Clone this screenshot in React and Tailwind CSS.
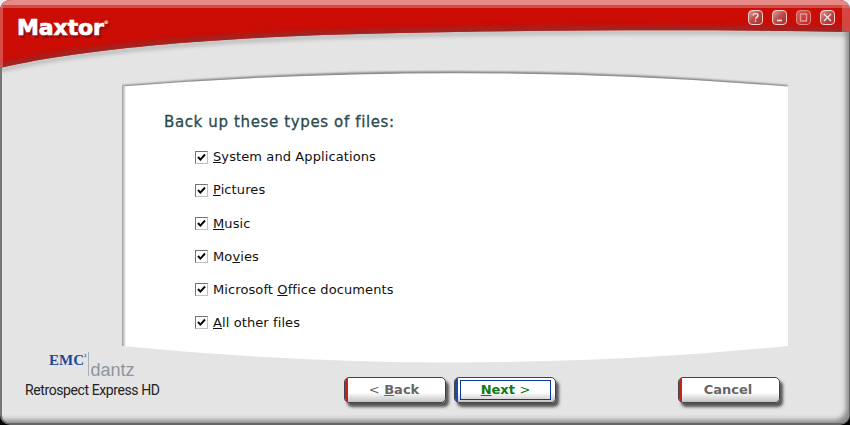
const FILE_TYPES = [
  { before: "", key: "S", after: "ystem and Applications" },
  { before: "", key: "P", after: "ictures" },
  { before: "", key: "M", after: "usic" },
  { before: "Mo", key: "v", after: "ies" },
  { before: "Microsoft ", key: "O", after: "ffice documents" },
  { before: "", key: "A", after: "ll other files" },
];

function TitleButton({ children, dim }) {
  return (
    <div
      className={`w-[15px] h-[15px] rounded-[4px] border flex items-center justify-center bg-gradient-to-br ${
        dim
          ? "border-[#e08a88] from-[#d85a58] to-[#c01c18]"
          : "border-[#f3d0d0] from-[#e49a98] via-[#b84a48] to-[#b02a28]"
      }`}
    >
      <svg width="11" height="11" viewBox="0 0 11 11" fill="none" stroke={dim ? "#e89a98" : "#f6e6e6"} strokeWidth="1.4">
        {children}
      </svg>
    </div>
  );
}

function Check() {
  return (
    <div className="w-[13px] h-[13px] bg-white border border-t-[#77736a] border-l-[#77736a] border-r-[#c4c0b8] border-b-[#c4c0b8] flex items-center justify-center shrink-0">
      <svg width="9" height="9" viewBox="0 0 9 9" fill="none" stroke="#000" strokeWidth="1.9">
        <path d="M1 4l2.4 2.6L8 1.5" />
      </svg>
    </div>
  );
}

function NavButton({ accent, children, focus }) {
  return (
    <div className="w-[102px] h-[26px] rounded-[5px] border border-[#444] bg-gradient-to-b from-white from-60% to-[#c4c4c4] shadow-[3px_4px_3px_#555] flex overflow-hidden">
      <div className={`w-[3px] h-full shrink-0 ${accent}`} />
      <div className="flex-1 flex items-center justify-center pr-[5px]">
        {focus ? (
          <div className="w-[91px] h-[20px] ml-[2px] border border-[#0a3a9a] flex items-center justify-center">
            {children}
          </div>
        ) : (
          children
        )}
      </div>
    </div>
  );
}

export default function App() {
  return (
    <div className="w-[850px] h-[425px] overflow-hidden bg-gradient-to-b from-[#eee] from-50% to-black to-50% font-['DejaVu_Sans',sans-serif]">
      <div className="relative w-full h-full flex flex-col bg-[#e4e4e4] rounded-t-[10px] rounded-b-[10px] border-l-2 border-l-[#777] border-r border-r-[#666] border-b-2 border-b-[#666] shadow-[inset_-6px_-6px_5px_-3px_#888]">
        {/* Red title swoosh */}
        <svg className="absolute left-[-2px] top-0" width="850" height="80" viewBox="0 0 850 80">
          <defs>
            <filter id="soft" x="-5%" y="-30%" width="110%" height="160%">
              <feGaussianBlur stdDeviation="2" />
            </filter>
            <clipPath id="swoosh">
              <path d="M0 12Q0 0 12 0H838Q850 0 850 12V32C700 29 560 30 400 33C180 37 60 54 0 68Z" />
            </clipPath>
          </defs>
          <path d="M0 70C60 56 180 39 400 35C560 32 700 31 850 34" fill="none" stroke="#777" strokeWidth="3" opacity="0.55" filter="url(#soft)" />
          <path d="M0 12Q0 0 12 0H838Q850 0 850 12V32C700 29 560 30 400 33C180 37 60 54 0 68Z" fill="#cb0d06" />
          <g clipPath="url(#swoosh)">
            <path d="M0 68C60 54 180 37 400 33C560 30 700 29 850 32" fill="none" stroke="#8a3030" strokeWidth="9" opacity="0.7" filter="url(#soft)" />
            <rect x="0" y="0" width="850" height="5" fill="#e58a86" />
            <rect x="0" y="5" width="850" height="3" fill="#d44a44" />
            <rect x="842" y="0" width="8" height="34" fill="#e58a86" opacity="0.45" />
            <rect x="0" y="0" width="3" height="68" fill="#e58a86" opacity="0.5" />
          </g>
        </svg>

        {/* Header */}
        <div className="relative h-[70px] shrink-0 flex items-start justify-between pl-[15px] pr-[14px]">
          <div className="mt-[15px] flex items-start text-white font-bold leading-[26px] [text-shadow:2px_3px_1px_#8e1010]">
            <span className="text-[22px] tracking-[-0.1px] [-webkit-text-stroke:0.7px_#fff]">Maxtor</span>
            <span className="text-[5px] leading-[14px]">®</span>
          </div>
          <div className="mt-[10px] flex gap-[9px]">
            <TitleButton>
              <path d="M3.2 3.5C3.2 1 8 1 8 3.5C8 5.3 5.5 5 5.5 7.2M5.5 8.2V9.8" />
            </TitleButton>
            <TitleButton>
              <path d="M3 8.5H8" strokeWidth="1.6" />
            </TitleButton>
            <TitleButton dim>
              <rect x="2.5" y="2" width="6" height="7" />
            </TitleButton>
            <TitleButton>
              <path d="M2 2L9 9M9 2L2 9" />
            </TitleButton>
          </div>
        </div>

        {/* White panel */}
        <div className="relative ml-[120px] w-[666px] flex flex-col">
          <svg className="block" width="666" height="18" viewBox="0 0 666 18">
            <defs>
              <filter id="edge" x="-2%" y="-50%" width="104%" height="200%">
                <feGaussianBlur stdDeviation="1.2" />
              </filter>
              <linearGradient id="capLeft" x1="0" x2="1" y1="0" y2="0">
                <stop offset="0" stopColor="#999" />
                <stop offset="1" stopColor="#fff" />
              </linearGradient>
            </defs>
            <path d="M0 17Q333 -11 666 17" fill="none" stroke="#555" strokeWidth="3" opacity="0.8" filter="url(#edge)" />
            <path d="M0 18V16.5Q333 -10 666 16.5V18Z" fill="#fff" />
            <rect x="0" y="16" width="4" height="2" fill="url(#capLeft)" />
          </svg>
          <div className="h-[258px] bg-[linear-gradient(to_right,#999,#fff_4px)] pl-[42px] pt-[25px]">
            <div className="text-[15px] leading-[18px] text-[#2b4a50] tracking-[0.63px] [-webkit-text-stroke:0.3px_#2b4a50]">
              Back up these types of files:
            </div>
            <div className="mt-[18px] ml-[31px] flex flex-col gap-[17.15px]">
              {FILE_TYPES.map((f) => (
                <div key={f.key} className="flex items-center gap-[5px] h-[16px] text-[13px] text-[#111] tracking-[0.1px]">
                  <Check />
                  <span>
                    {f.before}
                    <span className="underline">{f.key}</span>
                    {f.after}
                  </span>
                </div>
              ))}
            </div>
          </div>
          <svg className="block" width="666" height="17" viewBox="0 0 666 17">
            <path d="M0 0H666Q333 33 0 0Z" fill="#fff" />
          </svg>
        </div>

        {/* Footer: vendor logos and buttons */}
        <div className="relative -mt-[12px] flex items-start pl-[23px]">
          <div className="w-[319px] shrink-0">
            <div className="flex items-start pl-[24px] h-[30px]">
              <span className="text-[#1c4a9a] text-[15px] font-bold leading-[18px] font-['Liberation_Serif',serif] flex items-start">
                EMC<span className="text-[5px] leading-[10px]">2</span>
              </span>
              <div className="w-px h-[24px] mt-[1px] bg-[#aab0b8] ml-[1px] mr-[2px]" />
              <span className="text-[#8b96a2] text-[18px] leading-[20px] mt-[9px] font-['Liberation_Sans',sans-serif]">dantz</span>
            </div>
            <div className="text-[#222] text-[14px] leading-[16px] mt-[1px] whitespace-nowrap font-['Roboto',sans-serif] tracking-[-0.4px]">
              Retrospect Express HD
            </div>
          </div>
          <div className="mt-[26px] flex items-start gap-[8px]">
            <NavButton accent="bg-[#c8201c]">
              <span className="text-[13px] font-bold text-[#666]">
                <span className="font-normal">&lt;</span> <span className="underline">B</span>ack
              </span>
            </NavButton>
            <NavButton accent="bg-[#1c4aa0]" focus>
              <span className="text-[13px] font-bold text-[#0a7a14]">
                <span className="underline">N</span>ext <span className="font-normal">&gt;</span>
              </span>
            </NavButton>
            <div className="ml-[114px]">
              <NavButton accent="bg-[#c8201c]">
                <span className="text-[13px] font-bold text-[#666]">Cancel</span>
              </NavButton>
            </div>
          </div>
        </div>
      </div>
    </div>
  );
}
